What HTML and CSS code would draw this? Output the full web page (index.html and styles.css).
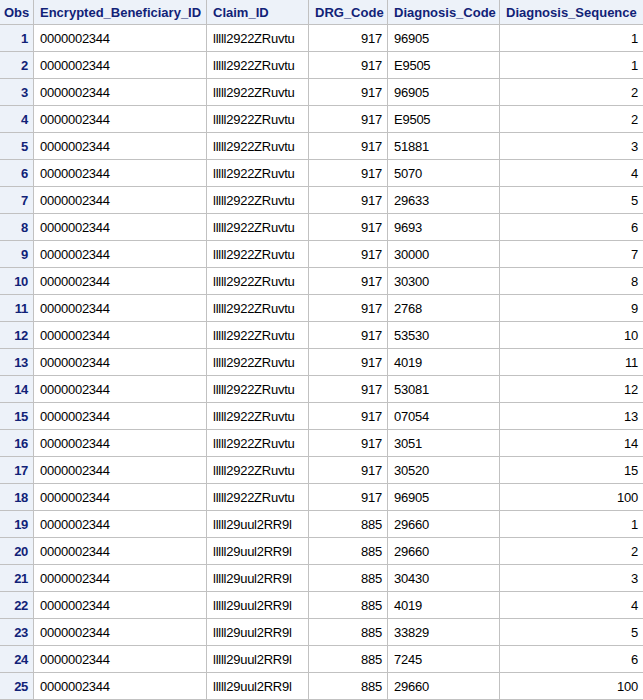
FILE: index.html
```html
<!DOCTYPE html>
<html>
<head>
<meta charset="utf-8">
<link rel="stylesheet" href="styles.css">
</head>
<body>
<table class="sas">
<colgroup>
<col class="c-obs"><col class="c-ben"><col class="c-claim"><col class="c-drg"><col class="c-dx"><col class="c-seq">
</colgroup>
<thead>
<tr><th class="r">Obs</th><th>Encrypted_Beneficiary_ID</th><th>Claim_ID</th><th>DRG_Code</th><th>Diagnosis_Code</th><th>Diagnosis_Sequence</th></tr>
</thead>
<tbody>
<tr><th class="r">1</th><td>0000002344</td><td>lllll2922ZRuvtu</td><td class="r">917</td><td>96905</td><td class="r">1</td></tr>
<tr><th class="r">2</th><td>0000002344</td><td>lllll2922ZRuvtu</td><td class="r">917</td><td>E9505</td><td class="r">1</td></tr>
<tr><th class="r">3</th><td>0000002344</td><td>lllll2922ZRuvtu</td><td class="r">917</td><td>96905</td><td class="r">2</td></tr>
<tr><th class="r">4</th><td>0000002344</td><td>lllll2922ZRuvtu</td><td class="r">917</td><td>E9505</td><td class="r">2</td></tr>
<tr><th class="r">5</th><td>0000002344</td><td>lllll2922ZRuvtu</td><td class="r">917</td><td>51881</td><td class="r">3</td></tr>
<tr><th class="r">6</th><td>0000002344</td><td>lllll2922ZRuvtu</td><td class="r">917</td><td>5070</td><td class="r">4</td></tr>
<tr><th class="r">7</th><td>0000002344</td><td>lllll2922ZRuvtu</td><td class="r">917</td><td>29633</td><td class="r">5</td></tr>
<tr><th class="r">8</th><td>0000002344</td><td>lllll2922ZRuvtu</td><td class="r">917</td><td>9693</td><td class="r">6</td></tr>
<tr><th class="r">9</th><td>0000002344</td><td>lllll2922ZRuvtu</td><td class="r">917</td><td>30000</td><td class="r">7</td></tr>
<tr><th class="r">10</th><td>0000002344</td><td>lllll2922ZRuvtu</td><td class="r">917</td><td>30300</td><td class="r">8</td></tr>
<tr><th class="r">11</th><td>0000002344</td><td>lllll2922ZRuvtu</td><td class="r">917</td><td>2768</td><td class="r">9</td></tr>
<tr><th class="r">12</th><td>0000002344</td><td>lllll2922ZRuvtu</td><td class="r">917</td><td>53530</td><td class="r">10</td></tr>
<tr><th class="r">13</th><td>0000002344</td><td>lllll2922ZRuvtu</td><td class="r">917</td><td>4019</td><td class="r">11</td></tr>
<tr><th class="r">14</th><td>0000002344</td><td>lllll2922ZRuvtu</td><td class="r">917</td><td>53081</td><td class="r">12</td></tr>
<tr><th class="r">15</th><td>0000002344</td><td>lllll2922ZRuvtu</td><td class="r">917</td><td>07054</td><td class="r">13</td></tr>
<tr><th class="r">16</th><td>0000002344</td><td>lllll2922ZRuvtu</td><td class="r">917</td><td>3051</td><td class="r">14</td></tr>
<tr><th class="r">17</th><td>0000002344</td><td>lllll2922ZRuvtu</td><td class="r">917</td><td>30520</td><td class="r">15</td></tr>
<tr><th class="r">18</th><td>0000002344</td><td>lllll2922ZRuvtu</td><td class="r">917</td><td>96905</td><td class="r">100</td></tr>
<tr><th class="r">19</th><td>0000002344</td><td>lllll29uul2RR9l</td><td class="r">885</td><td>29660</td><td class="r">1</td></tr>
<tr><th class="r">20</th><td>0000002344</td><td>lllll29uul2RR9l</td><td class="r">885</td><td>29660</td><td class="r">2</td></tr>
<tr><th class="r">21</th><td>0000002344</td><td>lllll29uul2RR9l</td><td class="r">885</td><td>30430</td><td class="r">3</td></tr>
<tr><th class="r">22</th><td>0000002344</td><td>lllll29uul2RR9l</td><td class="r">885</td><td>4019</td><td class="r">4</td></tr>
<tr><th class="r">23</th><td>0000002344</td><td>lllll29uul2RR9l</td><td class="r">885</td><td>33829</td><td class="r">5</td></tr>
<tr><th class="r">24</th><td>0000002344</td><td>lllll29uul2RR9l</td><td class="r">885</td><td>7245</td><td class="r">6</td></tr>
<tr><th class="r">25</th><td>0000002344</td><td>lllll29uul2RR9l</td><td class="r">885</td><td>29660</td><td class="r">100</td></tr>
</tbody>
</table>
</body>
</html>
```
FILE: styles.css
```css
html, body {
  margin: 0;
  padding: 0;
  background: #ffffff;
}
.sas {
  border-collapse: collapse;
  table-layout: fixed;
  width: 644px;
  margin: -1px 0 0 -1px;
  font-family: "Liberation Sans", Arial, sans-serif;
  font-size: 13px;
  color: #000000;
}
.c-obs { width: 34px; }
.c-ben { width: 173px; }
.c-claim { width: 102px; }
.c-drg { width: 79px; }
.c-dx { width: 112px; }
.c-seq { width: 144px; }
.sas th, .sas td {
  border: 1px solid #c1c1c1;
  padding: 0 5px 0 6px;
  text-align: left;
  white-space: nowrap;
  overflow: hidden;
}
.sas td {
  height: 26px;
  font-weight: normal;
  letter-spacing: -0.25px;
}
.sas thead th {
  height: 24px;
  background: #edf2f9;
  color: #112277;
  font-weight: bold;
  padding: 0 4px 0 6px;
}
.sas tbody th {
  background: #edf2f9;
  color: #112277;
  font-weight: bold;
  letter-spacing: -0.3px;
}
.sas .r {
  text-align: right;
}
.sas thead th.r {
  padding: 0 4px 0 4px;
}
```
